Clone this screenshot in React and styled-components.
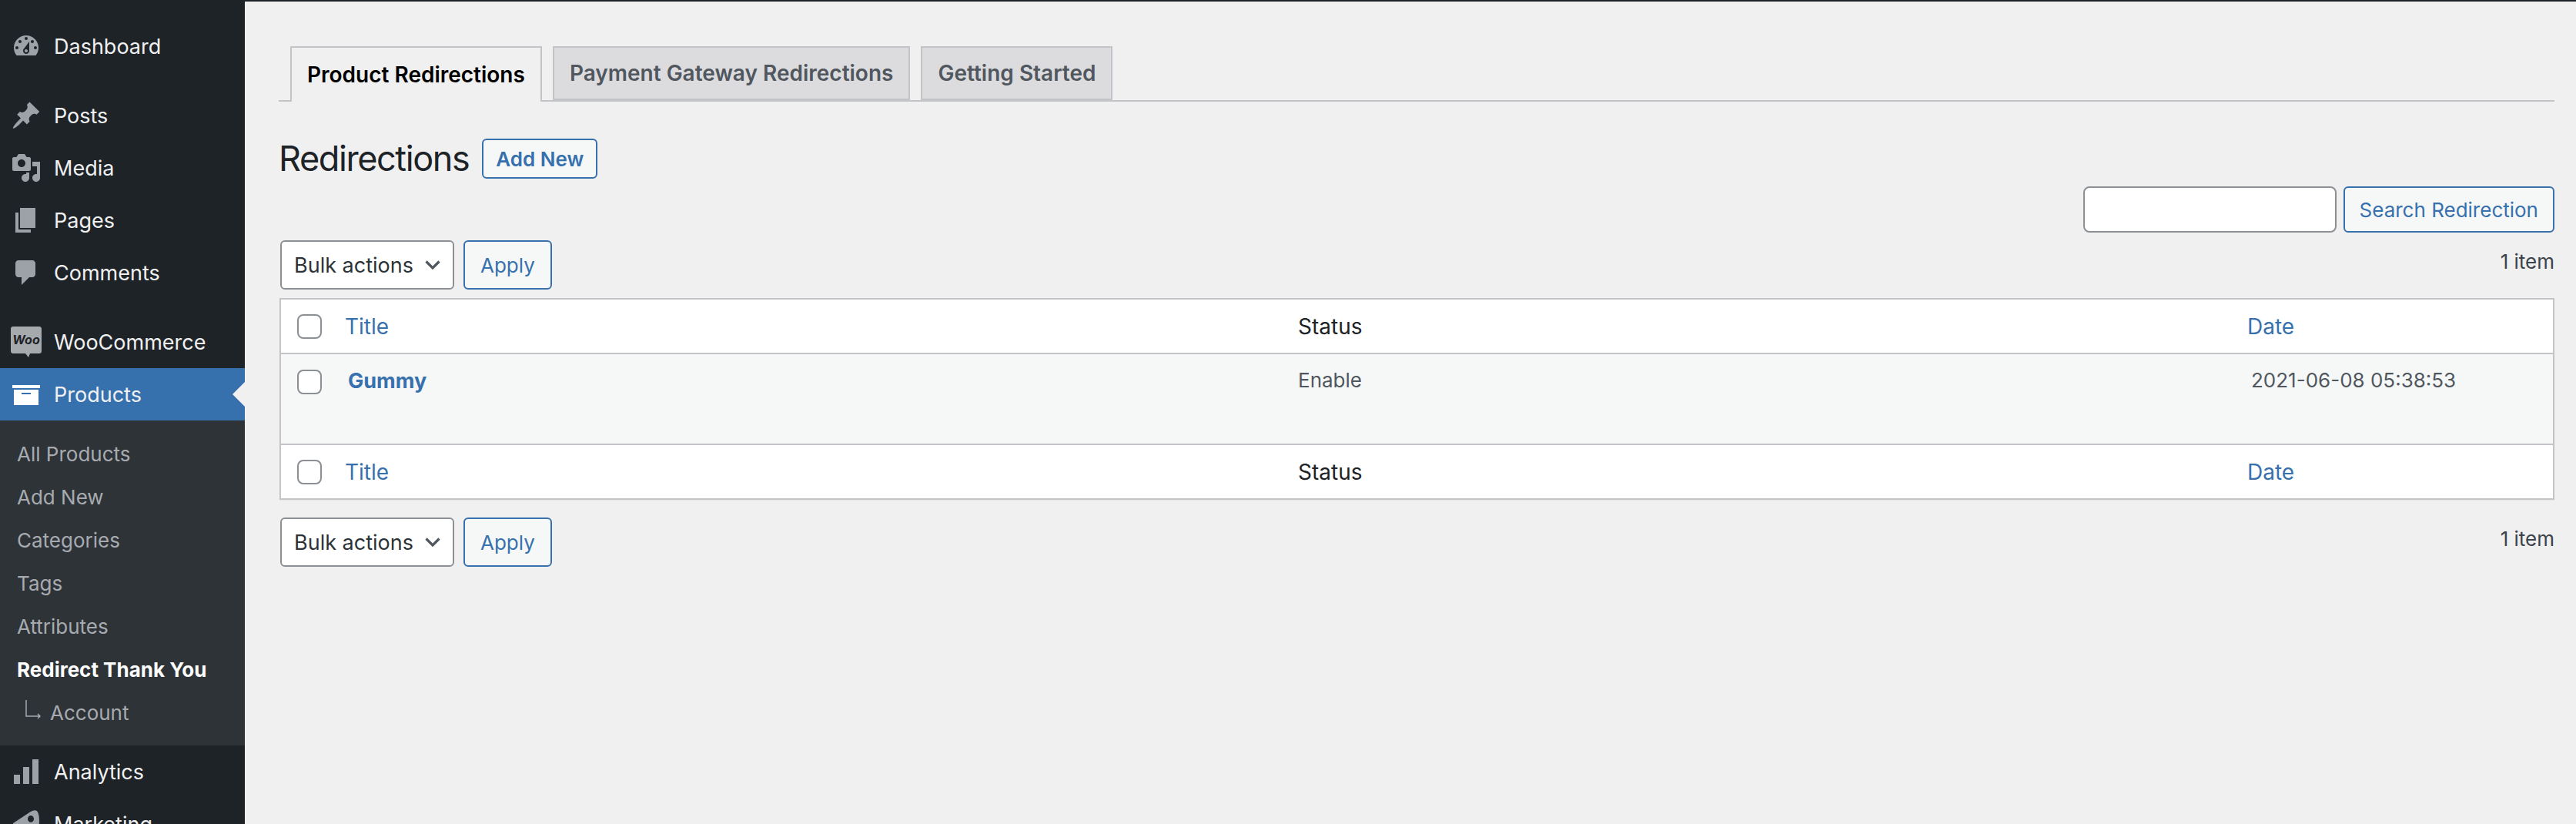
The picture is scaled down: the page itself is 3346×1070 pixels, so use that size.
import styled, { createGlobalStyle } from "styled-components";

const GlobalStyle = createGlobalStyle`
    html, body {
        margin: 0;
        height: 1070px;
        overflow: hidden;
        background-color: #f0f0f1;
        font-family: Inter, "Liberation Sans", sans-serif;
    }
`;

const StyledPage = styled.div`
    display: flex;
    height: 1070px;
    overflow: hidden;
`;

const StyledSidebar = styled.nav`
    flex: 0 0 318px;
    height: 1070px;
    padding-top: 26px;
    box-sizing: border-box;
    overflow: hidden;
    background-color: #1e2327;
`;

const StyledMenuItem = styled.div`
    position: relative;
    display: flex;
    align-items: center;
    gap: 16px;
    flex-shrink: 0;
    height: 68px;
    margin-top: ${props => props.$gap || 0}px;
    padding-left: 14px;
    font-size: 27px;
    color: #f0f0f1;
    background-color: ${props => props.$active ? "#3771ad" : "transparent"};

    svg {
        flex: 0 0 40px;
        width: 40px;
        height: 40px;
        fill: ${props => props.$active ? "#fff" : "#9da2a8"};
    }
`;

const StyledPointer = styled.span`
    position: absolute;
    top: 18px;
    right: 0;
    border-top: 16px solid transparent;
    border-bottom: 16px solid transparent;
    border-right: 16px solid #f0f0f1;
`;

const StyledSubmenu = styled.div`
    padding: 15px 0;
    background-color: #2e3338;
`;

const StyledSubItem = styled.div`
    display: flex;
    align-items: center;
    height: 56px;
    padding-left: ${props => props.$child ? 33 : 22}px;
    gap: 12px;
    font-size: 26px;
    font-weight: ${props => props.$current ? 700 : 400};
    color: ${props => props.$current ? "#fff" : "#a7abb0"};

    svg {
        flex: 0 0 20px;
        width: 20px;
        height: 24px;
        margin-top: -8px;
    }
`;

const StyledMain = styled.main`
    flex: 1;
    min-width: 0;
    padding: 58px 28px 0 44px;
    border-top: 2px solid #1e2327;
    color: #1d2327;
`;

const StyledTabs = styled.div`
    display: flex;
    gap: 14px;
    height: 70px;
    padding-left: 15px;
    border-bottom: 2px solid #c3c4c7;
`;

const StyledTab = styled.div`
    display: flex;
    align-items: center;
    height: ${props => props.$active ? 72 : 70}px;
    padding: 0 20px;
    box-sizing: border-box;
    border: 2px solid #c3c4c7;
    border-bottom: ${props => props.$active ? "none" : "2px solid #c3c4c7"};
    font-size: 28px;
    font-weight: 600;
    white-space: nowrap;
    color: ${props => props.$active ? "#000" : "#50575e"};
    background-color: ${props => props.$active ? "#f0f0f1" : "#dcdcde"};
`;

const StyledTitleRow = styled.div`
    display: flex;
    align-items: center;
    gap: 17px;
    height: 52px;
    margin-top: 48px;
`;

const StyledTitle = styled.h1`
    margin: 0;
    font-size: 45px;
    line-height: 52px;
    font-weight: 400;
    letter-spacing: -1.4px;
    color: #1d2327;
`;

const StyledButton = styled.button`
    height: ${props => props.$height || 64}px;
    padding: 0 ${props => props.$pad || 20}px;
    box-sizing: border-box;
    border: 2px solid #3771ad;
    border-radius: 6px;
    font-family: inherit;
    font-size: 26px;
    font-weight: ${props => props.$strong ? 600 : 400};
    color: #3771ad;
    background-color: #f6f7f7;
`;

const StyledSearchRow = styled.div`
    display: flex;
    justify-content: flex-end;
    gap: 9px;
    margin-top: 10px;
`;

const StyledSearchInput = styled.input`
    width: 329px;
    height: 60px;
    box-sizing: border-box;
    border: 2px solid #8c8f94;
    border-radius: 8px;
    background-color: #fff;
`;

const StyledTableNav = styled.div`
    display: flex;
    align-items: flex-start;
    gap: 12px;
    margin-top: ${props => props.$top}px;
    padding-left: 2px;
`;

const StyledSelect = styled.div`
    display: flex;
    align-items: center;
    justify-content: space-between;
    width: 226px;
    height: 64px;
    padding: 0 16px 0 16px;
    box-sizing: border-box;
    border: 2px solid #8c8f94;
    border-radius: 6px;
    font-size: 27px;
    color: #2c3338;
    background-color: #fff;

    svg {
        width: 20px;
        height: 12px;
    }
`;

const StyledCount = styled.div`
    margin: 13px 0 0 auto;
    font-size: 26px;
    line-height: 30px;
    color: #3c434a;
`;

const StyledTable = styled.table`
    width: calc(100% - 1px);
    margin: 11px 0 0 1px;
    border: 2px solid #c3c4c7;
    border-collapse: separate;
    border-spacing: 0;
    table-layout: fixed;
    background-color: #fff;
    box-shadow: 0 1px 1px rgba(0, 0, 0, 0.04);
`;

const StyledCell = styled.td`
    height: ${props => props.$height || 70}px;
    padding: 0 0 0 ${props => props.$pad || 0}px;
    box-sizing: border-box;
    vertical-align: ${props => props.$top ? "top" : "middle"};
    font-size: ${props => props.$size || 28}px;
    line-height: 34px;
    font-weight: ${props => props.$bold ? 700 : 400};
    color: ${props => props.$link ? "#3771ad" : props.$muted ? "#50575e" : "#1d2327"};
    border-top: ${props => props.$rule ? "2px solid #c3c4c7" : "none"};
    background-color: ${props => props.$tint ? "#f6f7f7" : "#fff"};
`;

const StyledCheckbox = styled.span`
    display: block;
    width: 32px;
    height: 32px;
    margin: ${props => props.$top || 0}px 0 0 21px;
    box-sizing: border-box;
    border: 2px solid #8c8f94;
    border-radius: 8px;
    background-color: #fff;
`;

const StyledCellText = styled.div`
    margin-top: ${props => props.$top}px;
`;

const Glyph = ({ d }) => (
    <svg viewBox="0 0 20 20"><path fillRule="evenodd" d={d} /></svg>
);

const icons = {
    dashboard: "M3.76 16h12.48c1.1-1.37 1.76-3.11 1.76-5 0-4.42-3.58-8-8-8s-8 3.58-8 8c0 1.89.66 3.63 1.76 5zM10 4c.55 0 1 .45 1 1s-.45 1-1 1-1-.45-1-1 .45-1 1-1zM6 6c.55 0 1 .45 1 1s-.45 1-1 1-1-.45-1-1 .45-1 1-1zm8 0c.55 0 1 .45 1 1s-.45 1-1 1-1-.45-1-1 .45-1 1-1zm-5.37 5.55L12 7v6c0 1.1-.9 2-2 2s-2-.9-2-2c0-.57.24-1.08.63-1.45zM4 10c.55 0 1 .45 1 1s-.45 1-1 1-1-.45-1-1 .45-1 1-1zm12 0c.55 0 1 .45 1 1s-.45 1-1 1-1-.45-1-1 .45-1 1-1zm-5 3c0-.55-.45-1-1-1s-1 .45-1 1 .45 1 1 1 1-.45 1-1z",
    posts: "M10.44 3.02l1.82-1.82 6.36 6.35-1.83 1.82c-1.05-.68-2.48-.57-3.41.36l-.75.75c-.92.93-1.04 2.35-.35 3.41l-1.83 1.82-2.41-2.41-2.8 2.79c-.42.42-3.38 2.71-3.8 2.29s1.86-3.39 2.28-3.81l2.79-2.79L4.1 9.36l1.83-1.82c1.05.69 2.48.57 3.4-.36l.75-.75c.93-.92 1.05-2.35.36-3.41z",
    media: "M13 11V4c0-.55-.45-1-1-1h-1.67L9 1H5L3.67 3H2c-.55 0-1 .45-1 1v7c0 .55.45 1 1 1h10c.55 0 1-.45 1-1zM7 4.5c1.38 0 2.5 1.12 2.5 2.5S8.38 9.5 7 9.5 4.5 8.38 4.5 7 5.62 4.5 7 4.5zM14 6h5v10.5c0 1.38-1.12 2.5-2.5 2.5S14 17.88 14 16.5s1.12-2.5 2.5-2.5c.17 0 .34.02.5.05V9h-3V6zm-4 8.05V13h2v3.5c0 1.38-1.12 2.5-2.5 2.5S7 17.88 7 16.5 8.12 14 9.5 14c.17 0 .34.02.5.05z",
    pages: "M6 15V2h10v13H6zm-1 1h8v2H3V5h2v11z",
    comments: "M5 2h9c1.1 0 2 .9 2 2v7c0 1.1-.9 2-2 2h-2l-5 5v-5H5c-1.1 0-2-.9-2-2V4c0-1.1.9-2 2-2z",
    products: "M19 4v2H1V4h18zM2 7h16v10H2V7zm11 3V9H7v1h6z",
    analytics: "M18 18V2h-4v16h4zm-6 0V7H8v11h4zm-6 0v-6H2v6h4z",
    marketing: "M1.5 9.5L11 3.2C12.800 2 14.800 .9 16.300 1.200 18 1.600 18.500 5 18.500 8s-.8 7-2.500 7.500c-1.200.3-3-.5-4.500-1.500L9 13v4c0 .8-.7 1.500-1.500 1.500h-2C4.700 18.500 4 17.800 4 17v-3.800l-2.500-.7zM13 4.500c-1.100 0-2 1-2 2.200s.9 2.200 2 2.200 2-1 2-2.200-.9-2.200-2-2.200z",
};

const WooIcon = () => (
    <svg viewBox="0 0 40 40">
        <path fill="#a7aaad" d="M3 0h34c1.700 0 3 1.300 3 3v29c0 1.700-1.300 3-3 3H25l-2 5-4-5H3c-1.700 0-3-1.300-3-3V3c0-1.700 1.300-3 3-3z" />
        <text x="20" y="23" textAnchor="middle" fontFamily="Inter, sans-serif" fontSize="16" fontWeight="700" fontStyle="italic" fill="#1e2327">Woo</text>
    </svg>
);

const ChildArrow = () => (
    <svg viewBox="0 0 20 24" fill="none" stroke="#a7abb0" strokeWidth="1.500">
        <path d="M1 0v21h18M16 18l3 3-3 3" />
    </svg>
);

const Chevron = () => (
    <svg viewBox="0 0 20 12" fill="none" stroke="#50575e" strokeWidth="3.200">
        <path d="M1.500 1.500l8.500 8.500 8.500-8.500" />
    </svg>
);

function Sidebar() {
    return (
        <StyledSidebar>
            <StyledMenuItem><Glyph d={icons.dashboard} />Dashboard</StyledMenuItem>
            <StyledMenuItem $gap={22}><Glyph d={icons.posts} />Posts</StyledMenuItem>
            <StyledMenuItem><Glyph d={icons.media} />Media</StyledMenuItem>
            <StyledMenuItem><Glyph d={icons.pages} />Pages</StyledMenuItem>
            <StyledMenuItem><Glyph d={icons.comments} />Comments</StyledMenuItem>
            <StyledMenuItem $gap={22}><WooIcon />WooCommerce</StyledMenuItem>
            <StyledMenuItem $active><Glyph d={icons.products} />Products<StyledPointer /></StyledMenuItem>
            <StyledSubmenu>
                <StyledSubItem>All Products</StyledSubItem>
                <StyledSubItem>Add New</StyledSubItem>
                <StyledSubItem>Categories</StyledSubItem>
                <StyledSubItem>Tags</StyledSubItem>
                <StyledSubItem>Attributes</StyledSubItem>
                <StyledSubItem $current>Redirect Thank You</StyledSubItem>
                <StyledSubItem $child><ChildArrow />Account</StyledSubItem>
            </StyledSubmenu>
            <StyledMenuItem><Glyph d={icons.analytics} />Analytics</StyledMenuItem>
            <StyledMenuItem><Glyph d={icons.marketing} />Marketing</StyledMenuItem>
        </StyledSidebar>
    );
}

function TableNav({ top }) {
    return (
        <StyledTableNav $top={top}>
            <StyledSelect>Bulk actions<Chevron /></StyledSelect>
            <StyledButton $pad={20}>Apply</StyledButton>
            <StyledCount>1 item</StyledCount>
        </StyledTableNav>
    );
}

function HeadRow({ rule }) {
    const height = rule ? 71 : 69;
    return (
        <tr>
            <StyledCell $rule={rule} $height={height}><StyledCheckbox /></StyledCell>
            <StyledCell $rule={rule} $height={height} $link>Title</StyledCell>
            <StyledCell $rule={rule} $height={height}>Status</StyledCell>
            <StyledCell $rule={rule} $height={height} $link>Date</StyledCell>
        </tr>
    );
}

export default function App() {
    return (
        <StyledPage>
            <GlobalStyle />
            <Sidebar />
            <StyledMain>
                <StyledTabs>
                    <StyledTab $active>Product Redirections</StyledTab>
                    <StyledTab>Payment Gateway Redirections</StyledTab>
                    <StyledTab>Getting Started</StyledTab>
                </StyledTabs>
                <StyledTitleRow>
                    <StyledTitle>Redirections</StyledTitle>
                    <StyledButton $height={52} $pad={16} $strong>Add New</StyledButton>
                </StyledTitleRow>
                <StyledSearchRow>
                    <StyledSearchInput />
                    <StyledButton $height={60} $pad={19}>Search Redirection</StyledButton>
                </StyledSearchRow>
                <TableNav top={10} />
                <StyledTable>
                    <colgroup>
                        <col width="83" />
                        <col width="1238" />
                        <col width="1233" />
                        <col />
                    </colgroup>
                    <thead><HeadRow /></thead>
                    <tbody>
                        <tr>
                            <StyledCell $rule $tint $top $height={118}><StyledCheckbox $top={20} /></StyledCell>
                            <StyledCell $rule $tint $top $link $bold $size={27} $pad={4}><StyledCellText $top={18}>Gummy</StyledCellText></StyledCell>
                            <StyledCell $rule $tint $top $muted $size={26}><StyledCellText $top={17}>Enable</StyledCellText></StyledCell>
                            <StyledCell $rule $tint $top $muted $size={26} $pad={5}><StyledCellText $top={17}>2021-06-08 05:38:53</StyledCellText></StyledCell>
                        </tr>
                    </tbody>
                    <tfoot><HeadRow rule /></tfoot>
                </StyledTable>
                <TableNav top={23} />
            </StyledMain>
        </StyledPage>
    );
}
